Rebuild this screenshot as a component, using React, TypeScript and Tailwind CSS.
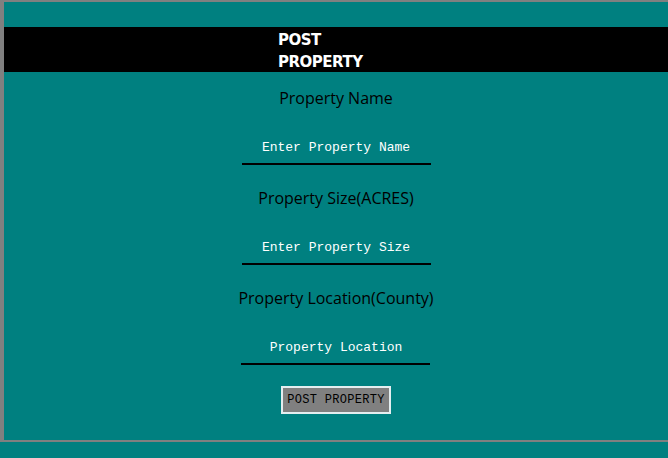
import React from "react";

const fields = [
  { label: "Property Name", placeholder: "Enter Property Name" },
  { label: "Property Size(ACRES)", placeholder: "Enter Property Size" },
  { label: "Property Location(County)", placeholder: "Property Location" },
];

const App: React.FC = () => {
  return (
    <div className="min-h-[458px] w-full bg-[#008080]">
      <div className="h-[442px] border-t-2 border-b-2 border-l-4 border-[#808080]">
        <div className="mt-[25px] h-[45px] bg-black">
          <h1 className="ml-[274px] w-[90px] pt-[2px] text-[15px] leading-[22px] font-bold tracking-[-0.5px] text-white font-['DejaVu_Sans',sans-serif]">
            POST PROPERTY
          </h1>
        </div>

        <form className="flex flex-col items-center">
          {fields.map((f, idx) => (
            <div key={idx} className="flex flex-col items-center">
              <label className="mt-[16px] h-[20px] text-[16px] leading-[20px] text-black font-['Open_Sans',sans-serif]">
                {f.label}
              </label>
              <input
                placeholder={f.placeholder}
                className="mt-[27px] mb-[7px] h-[30px] w-[189px] border-b-2 border-black bg-transparent pb-[4px] text-center text-[13px] outline-none placeholder:text-white font-['Liberation_Mono',monospace]"
              />
            </div>
          ))}
          <button
            type="button"
            className="mt-[14px] h-[28px] w-[110px] border-2 border-[#e4eef0] bg-[#808080] text-[12px] tracking-[0.3px] text-black font-['Liberation_Mono',monospace]"
          >
            POST PROPERTY
          </button>
        </form>
      </div>
    </div>
  );
};

export default App;
